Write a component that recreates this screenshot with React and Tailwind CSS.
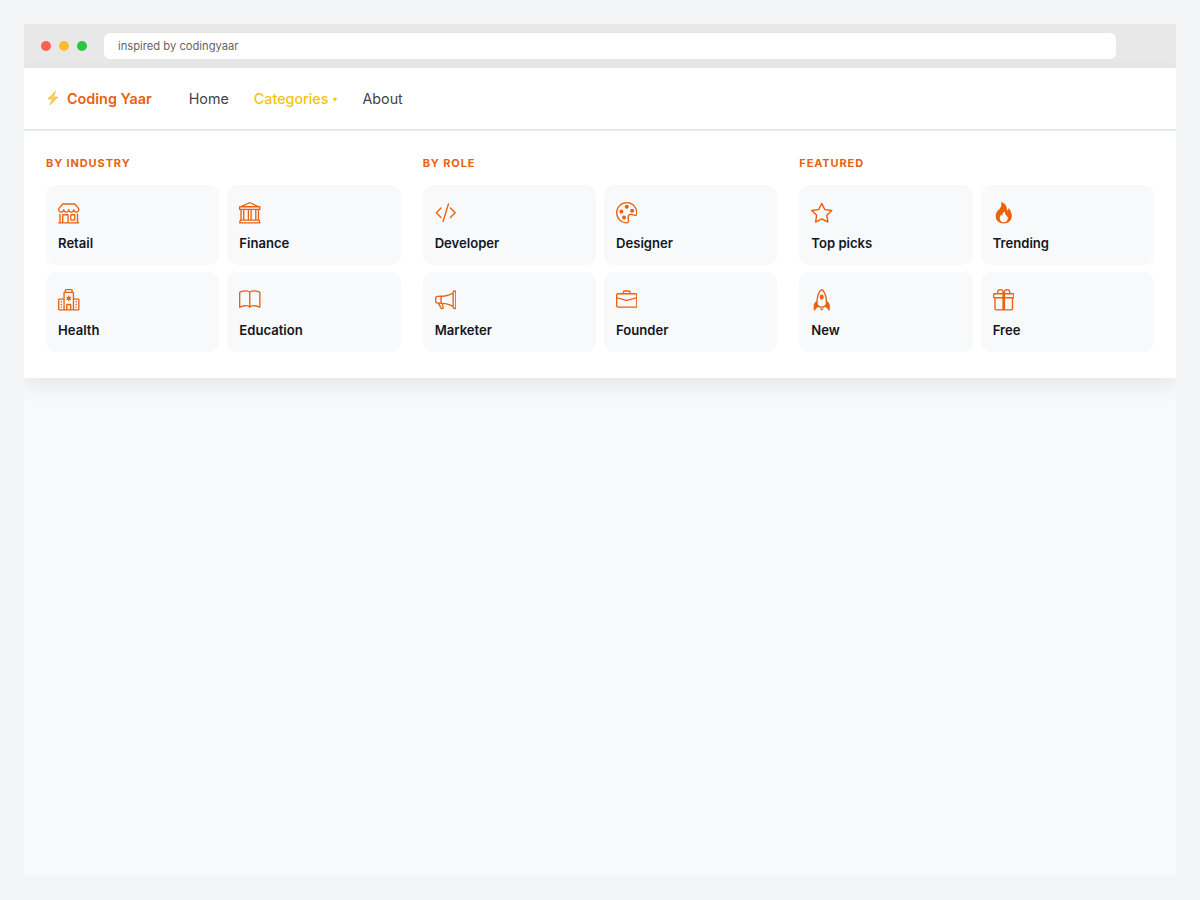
import { BsShop, BsBank, BsHospital, BsBook, BsCodeSlash, BsPalette, BsMegaphone, BsBriefcase, BsStar, BsFire, BsRocket, BsGift } from 'react-icons/bs';

const sections = [
  {
    title: 'By Industry',
    items: [
      ['Retail', BsShop],
      ['Finance', BsBank],
      ['Health', BsHospital],
      ['Education', BsBook],
    ],
  },
  {
    title: 'By Role',
    items: [
      ['Developer', BsCodeSlash],
      ['Designer', BsPalette],
      ['Marketer', BsMegaphone],
      ['Founder', BsBriefcase],
    ],
  },
  {
    title: 'Featured',
    items: [
      ['Top picks', BsStar],
      ['Trending', BsFire],
      ['New', BsRocket],
      ['Free', BsGift],
    ],
  },
];

export default function App() {
  return (
    <div className="min-h-[900px] bg-[#f4f5f7] p-6 font-['Inter',sans-serif]">
      <div className="flex h-[852px] flex-col overflow-hidden bg-[#f7f9fb]">
        <div className="flex h-11 items-center bg-[#e8e8e8] pl-[17px] pr-[60px]">
          <div className="flex items-center gap-2">
            <span className="h-2.5 w-2.5 rounded-full bg-[#ff5f57]" />
            <span className="h-2.5 w-2.5 rounded-full bg-[#febc2e]" />
            <span className="h-2.5 w-2.5 rounded-full bg-[#28c840]" />
          </div>
          <div className="ml-[17px] flex h-[26px] flex-1 items-center rounded-md bg-white px-3.5 text-[11.2px] text-[#666666]">
            inspired by codingyaar
          </div>
        </div>
        <div className="shadow-[0_8px_20px_rgba(0,0,0,0.08)]">
          <nav className="flex h-[63px] items-center border-b-2 border-[#e0e8e8] bg-white px-[22px]">
            <div className="flex items-center gap-[7px] text-[14.4px] font-semibold text-[#e8620f]">
              <svg width="14" height="16" viewBox="0 0 14 16" className="shrink-0">
                <path d="M9.5 1 2 9h4.2L4 15l8-8H7.6z" fill="#fbd34d" stroke="#f5b041" strokeWidth="0.6" strokeLinejoin="round" />
              </svg>
              Coding Yaar
            </div>
            <div className="ml-[37px] flex items-center gap-[25px] text-[14.3px] text-[#444444]">
              <span>Home</span>
              <span className="flex items-center gap-[5px] font-medium text-[#f5c211]">
                Categories
                <span className="text-[8px]">▾</span>
              </span>
              <span>About</span>
            </div>
          </nav>
          <div className="grid grid-cols-3 gap-[22px] bg-white px-[22px] py-[26px]">
            {sections.map((s) => (
              <div key={s.title}>
                <div className="mb-4 text-[11px] font-bold uppercase leading-[12px] tracking-[0.08em] text-[#e8620f]">
                  {s.title}
                </div>
                <div className="grid grid-cols-2 gap-x-2 gap-y-[7px]">
                  {s.items.map(([label, Icon]) => (
                    <div key={label} className="flex h-[80px] flex-col rounded-[10px] bg-[#f7f9fb] px-3 pt-[17px]">
                      <Icon size={21.5} className="text-[#e8620f]" />
                      <span className="mt-[10.5px] text-[13.1px] font-semibold leading-[18px] text-[#14171f]">{label}</span>
                    </div>
                  ))}
                </div>
              </div>
            ))}
          </div>
        </div>
      </div>
    </div>
  );
}
